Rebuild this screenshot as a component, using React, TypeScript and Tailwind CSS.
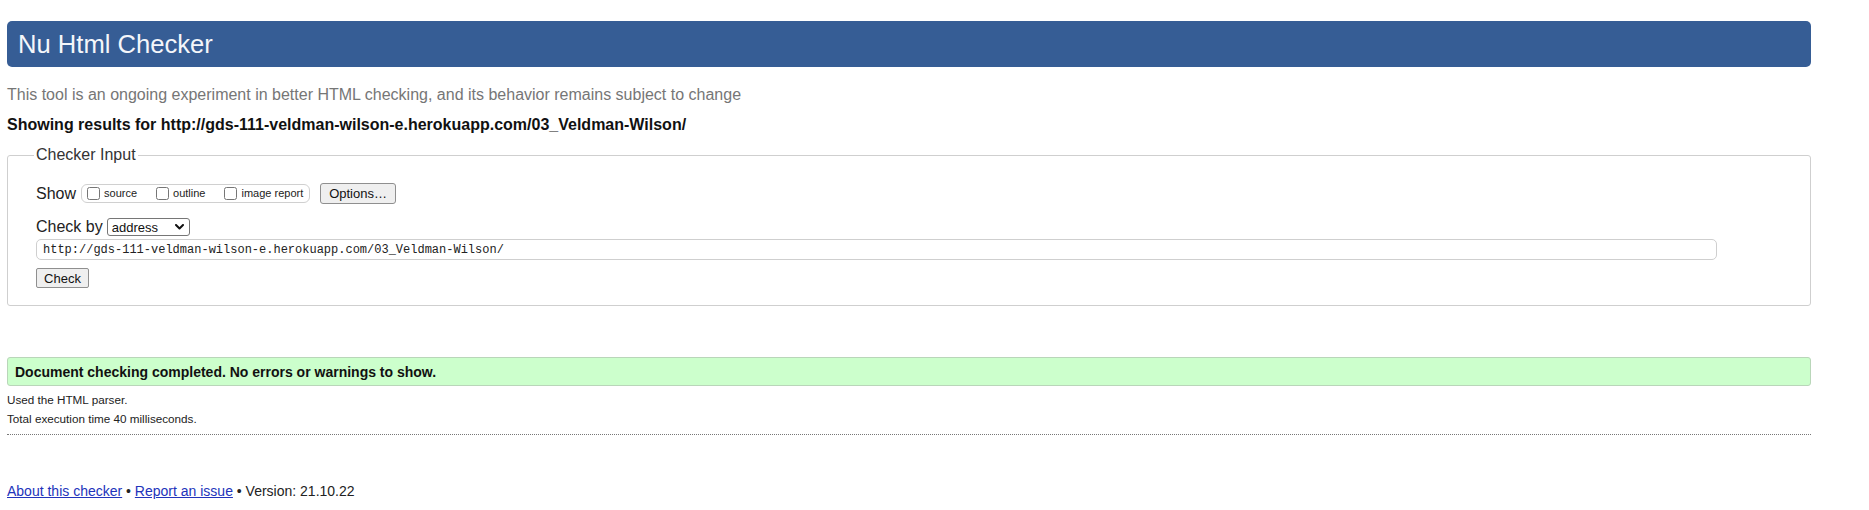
import React, { useState } from 'react';

// Nu Html Checker results page

const URL = 'http://gds-111-veldman-wilson-e.herokuapp.com/03_Veldman-Wilson/';

const ShowOption = ({ label, checked, onChange }: { label: string; checked: boolean; onChange: () => void }) => (
  <label className="flex items-center">
    <input
      type="checkbox"
      checked={checked}
      onChange={onChange}
      className="m-0 w-[13px] h-[13px]"
    />
    <span className="ml-[4px] text-[11px] leading-[13px] text-[#222]">{label}</span>
  </label>
);

const App = () => {
  const [show, setShow] = useState({ source: false, outline: false, image: false });
  const [doc, setDoc] = useState(URL);

  return (
    <div
      className="min-h-[510px] bg-white pl-[7px] pr-[58px] pt-[21px] text-black"
      style={{ fontFamily: '"Liberation Sans", Arial, sans-serif' }}
    >
      <div className="h-[46px] rounded-[5px] bg-[#365d95] pl-[11px] flex items-center">
        <h1 className="text-[25.6px] leading-[30px] font-normal text-[#f4f6fa]">Nu Html Checker</h1>
      </div>

      <p className="mt-[19px] text-[16px] leading-[18px] text-[#767676]">
        This tool is an ongoing experiment in better HTML checking, and its behavior remains subject to change
      </p>
      <p className="mt-[12px] text-[16px] leading-[18px] font-bold text-[#111]">
        Showing results for {URL}
      </p>

      <fieldset className="mt-[12px] border border-[#cfcfcf] rounded-[3px] pl-[28px] pr-[10px] pt-[19px] pb-[17px]">
        <legend className="ml-[-2px] px-[2px] text-[16px] leading-[18px] text-[#333]">Checker Input</legend>

        <div className="flex items-center h-[21px]">
          <span className="text-[16px] leading-[18px] text-[#222]">Show</span>
          <div className="ml-[5px] h-[19px] w-[229px] border border-[#d0d0d0] rounded-[6px] flex items-center pl-[5px] gap-[19px]">
            <ShowOption label="source" checked={show.source} onChange={() => setShow({ ...show, source: !show.source })} />
            <ShowOption label="outline" checked={show.outline} onChange={() => setShow({ ...show, outline: !show.outline })} />
            <ShowOption label="image report" checked={show.image} onChange={() => setShow({ ...show, image: !show.image })} />
          </div>
          <button className="ml-[10px] h-[21px] w-[76px] border border-[#8f8f8f] rounded-[3px] bg-[#efefef] text-[13px] leading-[15px] text-[#111]">
            Options…
          </button>
        </div>

        <div className="mt-[14px] flex items-center h-[18px]">
          <span className="text-[16px] leading-[18px] text-[#222]">Check by</span>
          <div className="ml-[4px] h-[18px] w-[83px] border border-[#767676] rounded-[3px] bg-white flex items-center justify-between pl-[4px] pr-[5px]">
            <span className="text-[13px] leading-[15px] text-[#111]">address</span>
            <svg width="9" height="6" viewBox="0 0 9 6" fill="none">
              <polyline points="1,1 4.5,4.5 8,1" stroke="#111" strokeWidth="2" strokeLinecap="round" strokeLinejoin="round" />
            </svg>
          </div>
        </div>

        <input
          value={doc}
          onChange={(e) => setDoc(e.target.value)}
          className="mt-[3px] block h-[21px] w-[1681px] border border-[#cfcfcf] rounded-[5px] px-[6px] text-[12px] text-[#222] outline-none"
          style={{ fontFamily: '"Liberation Mono", "DejaVu Sans Mono", monospace' }}
        />

        <button className="mt-[8px] block h-[20px] w-[53px] border border-[#8f8f8f] rounded-[2px] bg-[#efefef] text-[13px] leading-[15px] text-[#111]">
          Check
        </button>
      </fieldset>

      <div className="mt-[51px] h-[29px] border border-[#b9d6b9] rounded-[3px] bg-[#ccffcc] flex items-center pl-[7px]">
        <span className="text-[14px] leading-[16px] font-bold text-[#111]">
          Document checking completed. No errors or warnings to show.
        </span>
      </div>

      <div className="mt-[4px] text-[11.7px] leading-[19px] text-[#222]">
        <p>Used the HTML parser.</p>
        <p>Total execution time 40 milliseconds.</p>
      </div>

      <hr className="mt-[6px] border-0 border-t border-dotted border-[#777]" />

      <p className="mt-[48px] text-[14px] leading-[16px] text-[#222]">
        <a href="#" className="text-[#2233bb] underline">About this checker</a>
        {' • '}
        <a href="#" className="text-[#2233bb] underline">Report an issue</a>
        {' • Version: 21.10.22'}
      </p>
    </div>
  );
};

export default App;
